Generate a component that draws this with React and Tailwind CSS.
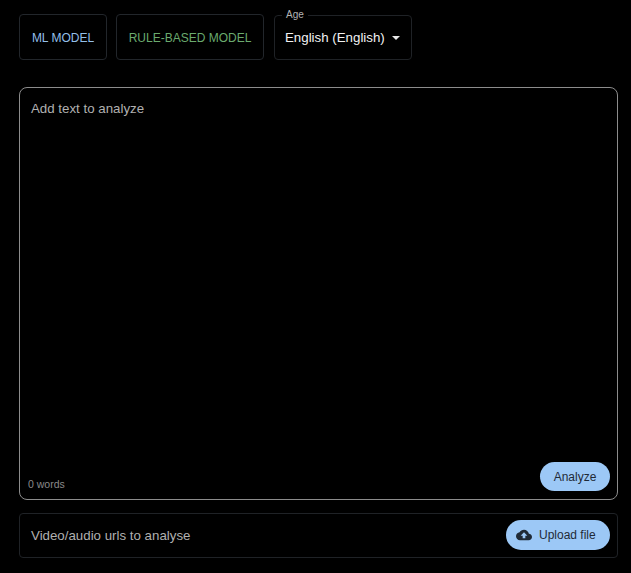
import React from 'react';

const font = "font-['Liberation_Sans',Arial,sans-serif]";

const App = () => {
  return (
    <div className={`${font} w-[631px] h-[573px] overflow-hidden bg-black pl-[19px] pr-[13px] pt-[14px]`}>
      {/* Top row */}
      <div className="flex items-start h-[46px]">
        <button className="w-[88px] h-[46px] pt-px rounded border border-[#22262b] text-[12px] text-[#93bfe8]">
          ML MODEL
        </button>
        <button className="ml-[9px] w-[148px] h-[46px] pt-px rounded border border-[#22262b] text-[12px] text-[#6aaa6e]">
          RULE-BASED MODEL
        </button>
        <div className="relative ml-[10px] mt-px w-[138px] h-[45px] rounded border border-[#1f2226] flex items-center pl-[10px]">
          <span className="absolute left-[7px] -top-[7px] bg-black px-[4px] text-[10px] leading-[12px] text-[#b3b3b3]">Age</span>
          <span className="text-[13.3px] whitespace-nowrap text-[#f2f2f2]">English (English)</span>
          <span className="ml-[7px] w-0 h-0 border-x-[4px] border-x-transparent border-t-[4px] border-t-[#e8e8e8]"></span>
        </div>
      </div>

      {/* Text area */}
      <div className="mt-[27px] w-[599px] h-[413px] rounded-lg border border-[#8c8c8c] flex flex-col justify-between">
        <div className="pl-[11px] pt-[13px] text-[13.3px] leading-[16px] text-[#b0b0b0]">Add text to analyze</div>
        <div className="flex items-end justify-between pl-[8px] pr-[7px] pb-[8px]">
          <span className="text-[10.5px] leading-[13px] text-[#8a8a8a]">0 words</span>
          <button className="w-[70px] h-[29px] rounded-full bg-[#9cc8f6] text-[12px] text-[#1f2a36]">
            Analyze
          </button>
        </div>
      </div>

      {/* Urls row */}
      <div className="mt-[13px] w-[599px] h-[45px] rounded border border-[#1f2226] flex items-center justify-between pl-[11px] pr-[7px]">
        <span className="text-[13.3px] text-[#b0b0b0]">Video/audio urls to analyse</span>
        <button className="w-[104px] h-[30px] mb-px rounded-full bg-[#9cc8f6] flex items-center pl-[10px] text-[12px] text-[#1f2a36]">
          <svg width="16" height="16" viewBox="0 0 24 24" fill="#1f2a36">
            <path d="M19.35 10.04C18.67 6.59 15.64 4 12 4 9.11 4 6.6 5.64 5.35 8.04 2.34 8.36 0 10.91 0 14c0 3.31 2.69 6 6 6h13c2.76 0 5-2.24 5-5 0-2.64-2.05-4.78-4.65-4.96zM14 13v4h-4v-4H7l5-5 5 5h-3z" />
          </svg>
          <span className="ml-[7px]">Upload file</span>
        </button>
      </div>
    </div>
  );
};

export default App;
